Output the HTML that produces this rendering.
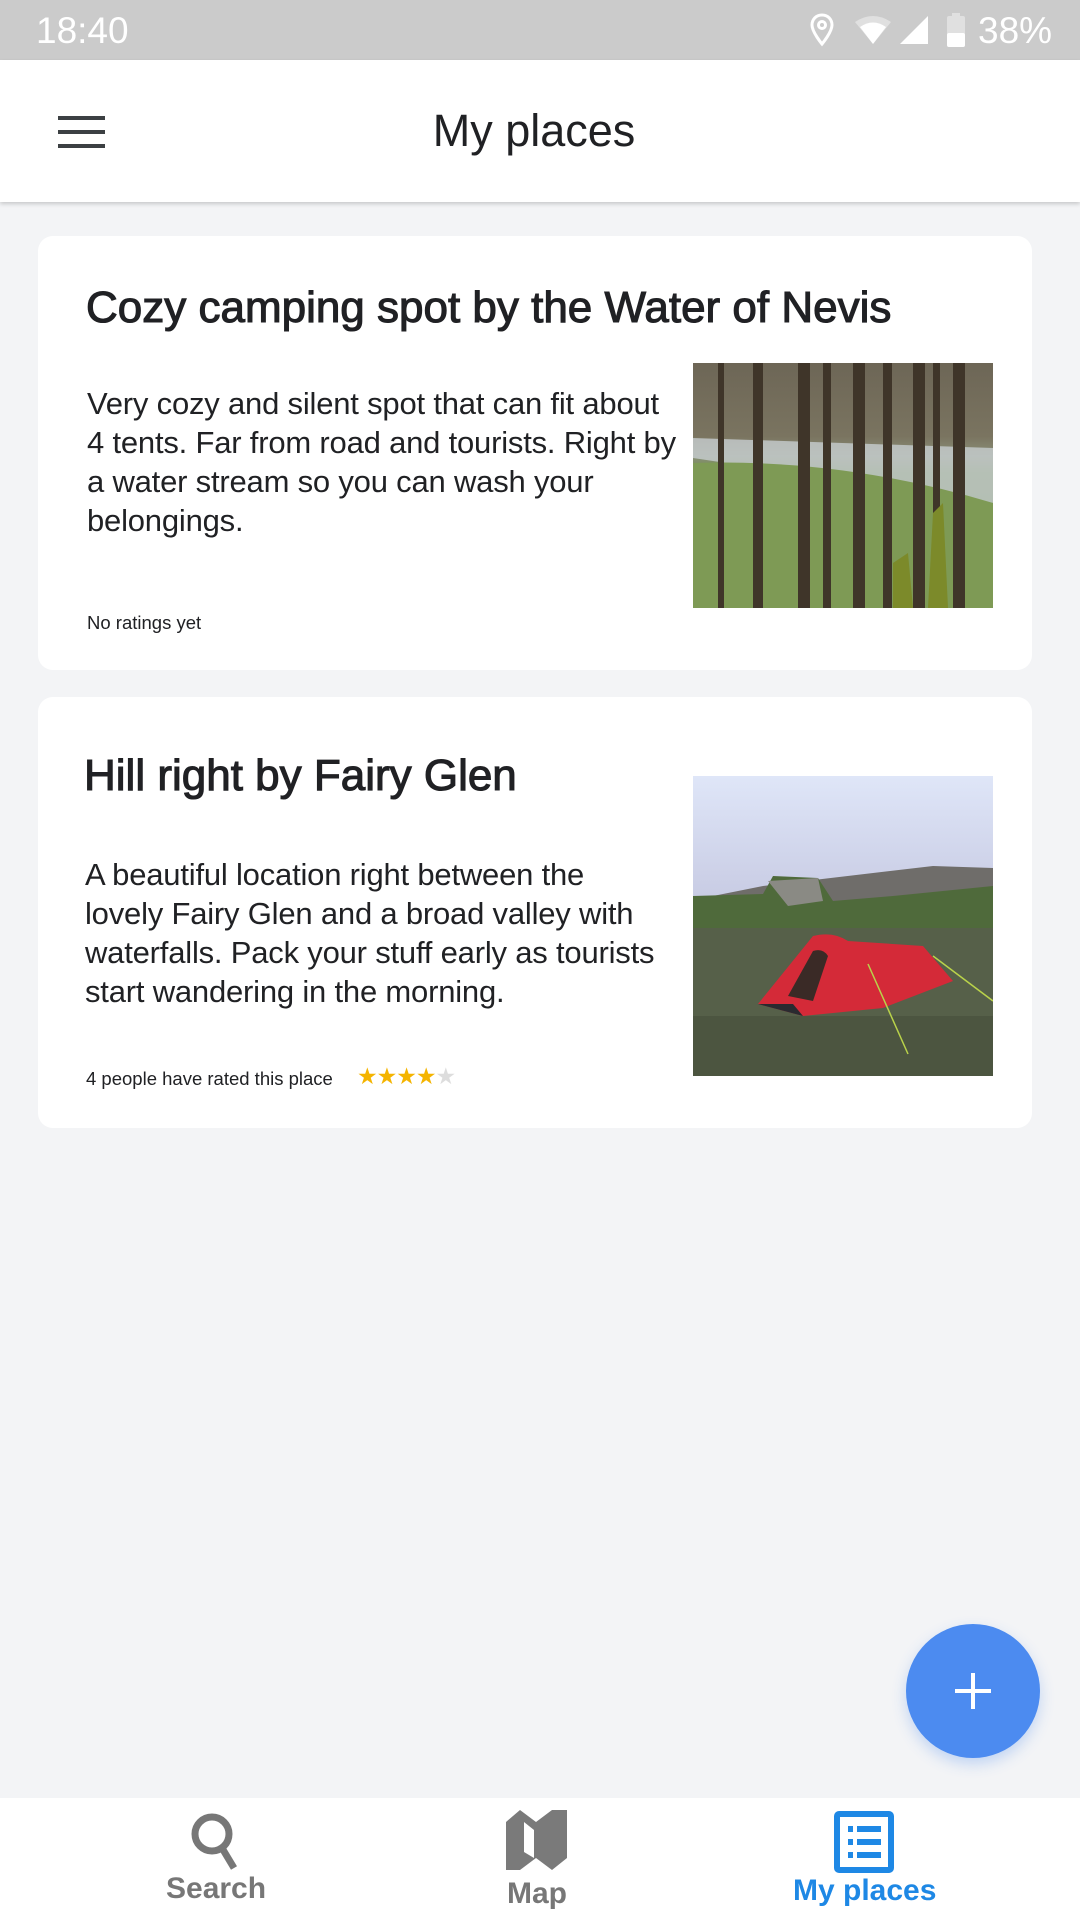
<!DOCTYPE html>
<html><head><meta charset="utf-8"><style>
*{margin:0;padding:0;box-sizing:border-box}
body{width:1080px;height:1920px;background:#f3f4f6;font-family:"Liberation Sans",sans-serif;position:relative;overflow:hidden;color:#202124}
.abs{position:absolute}
.status{left:0;top:0;width:1080px;height:60px;background:#cbcbcb;color:#fff}
.appbar{left:0;top:60px;width:1080px;height:142px;background:#fff;box-shadow:0 2px 4px rgba(0,0,0,.18)}
.card{left:38px;width:994px;background:#fff;border-radius:15px}
.title{font-size:44px;font-weight:normal;-webkit-text-stroke:1.1px #202124;white-space:nowrap}
.body{font-size:31px;line-height:39px;width:590px;letter-spacing:-0.2px}
.small{font-size:18.5px}
</style></head><body>
<div class="abs status">
 <div class="abs" style="left:36px;top:10px;font-size:37px;">18:40</div>
 <svg class="abs" style="left:808px;top:12px" width="28" height="36" viewBox="0 0 28 36"><path d="M14 3C8 3 4 7.5 4 13c0 7 10 19 10 19s10-12 10-19c0-5.5-4-10-10-10z" fill="none" stroke="#fff" stroke-width="3"/><circle cx="14" cy="13" r="3.5" fill="none" stroke="#fff" stroke-width="3"/></svg>
 <svg class="abs" style="left:853px;top:14px" width="40" height="32" viewBox="0 0 40 32"><path d="M2 8Q20-4 38 8L20 30z" fill="#e0e0e0"/><path d="M7 13Q20 4 33 13L20 30z" fill="#fff"/></svg>
 <svg class="abs" style="left:898px;top:14px" width="32" height="32"><path d="M30 2V30H2z" fill="#fff"/></svg>
 <svg class="abs" style="left:946px;top:13px" width="20" height="34"><rect x="6" y="0" width="8" height="4" fill="#e0e0e0"/><rect x="1" y="3" width="18" height="31" rx="2" fill="#e0e0e0"/><rect x="1" y="20" width="18" height="14" rx="2" fill="#fff"/></svg>
 <div class="abs" style="left:978px;top:10px;font-size:37px;">38%</div>
</div>
<div class="abs appbar">
 <div class="abs" style="left:58px;top:56px;width:47px;height:4px;background:#3c4043"></div>
 <div class="abs" style="left:58px;top:70px;width:47px;height:4px;background:#3c4043"></div>
 <div class="abs" style="left:58px;top:84px;width:47px;height:4px;background:#3c4043"></div>
 <div class="abs" style="left:0;width:1068px;top:45px;text-align:center;font-size:45px;color:#202124">My places</div>
</div>

<div class="abs card" style="top:236px;height:434px"></div>
<div class="abs title" style="left:86px;top:283px">Cozy camping spot by the Water of Nevis</div>
<div class="abs body" style="left:87px;top:384px">Very cozy and silent spot that can fit about 4 tents. Far from road and tourists. Right by a water stream so you can wash your belongings.</div>
<div class="abs small" style="left:87px;top:612px">No ratings yet</div>
<svg class="abs" style="left:693px;top:363px" width="300" height="245" viewBox="0 0 300 245">
 <defs><linearGradient id="g1" x1="0" y1="0" x2="0" y2="1"><stop offset="0" stop-color="#6d6656"/><stop offset=".3" stop-color="#7a7460"/><stop offset=".38" stop-color="#8a9078"/><stop offset=".45" stop-color="#6f8a4c"/><stop offset="1" stop-color="#5f7c3e"/></linearGradient></defs>
 <rect width="300" height="245" fill="url(#g1)"/>
 <path d="M0 75L300 85L300 140L0 95z" fill="#c7cdd0" opacity=".8"/>
 <path d="M0 100Q150 95 300 140L300 245L0 245z" fill="#7e9a55"/>
 <g fill="#3f3529">
 <rect x="60" y="0" width="10" height="245"/><rect x="105" y="0" width="12" height="245"/><rect x="130" y="0" width="8" height="245"/>
 <rect x="160" y="0" width="12" height="245"/><rect x="190" y="0" width="9" height="245"/><rect x="220" y="0" width="12" height="245"/>
 <rect x="260" y="0" width="12" height="245"/><rect x="25" y="0" width="6" height="245"/><rect x="240" y="0" width="7" height="245"/>
 </g>
 <path d="M200 200L215 190L220 245L200 245zM240 150L250 140L255 245L235 245z" fill="#7c8a2a"/>
</svg>

<div class="abs card" style="top:697px;height:431px"></div>
<div class="abs title" style="left:84px;top:751px">Hill right by Fairy Glen</div>
<div class="abs body" style="left:85px;top:855px;width:585px">A beautiful location right between the lovely Fairy Glen and a broad valley with waterfalls. Pack your stuff early as tourists start wandering in the morning.</div>
<div class="abs small" style="left:86px;top:1068px">4 people have rated this place</div>
<div class="abs" style="left:357px;top:1063px;font-size:23px;color:#f4b400;letter-spacing:-1px">★★★★<span style="color:#ddd">★</span></div>
<svg class="abs" style="left:693px;top:776px" width="300" height="300" viewBox="0 0 300 300">
 <defs><linearGradient id="sk" x1="0" y1="0" x2="0" y2="1"><stop offset="0" stop-color="#dfe6f8"/><stop offset="1" stop-color="#a7a5c6"/></linearGradient></defs>
 <rect width="300" height="300" fill="url(#sk)"/>
 <path d="M20 120L70 110L240 90L300 92L300 160L0 160z" fill="#6f6d6a"/>
 <path d="M0 120L70 118L80 100L125 102L140 125L200 120L300 110L300 155L0 155z" fill="#4f6a3b"/>
 <path d="M75 105L125 102L130 125L95 130z" fill="#8a8a84"/>
 <rect y="152" width="300" height="148" fill="#566049"/>
 <rect y="240" width="300" height="60" fill="#4c5540"/>
 <path d="M65 228L120 160Q140 155 155 165L230 170L260 205L190 232L110 240z" fill="#d42a38"/>
 <path d="M95 220L120 175Q130 172 135 180L120 225z" fill="#3a2a26"/>
 <path d="M65 228L100 228L110 240z" fill="#2a2a30"/>
 <path d="M175 188L215 278M240 180L300 225" stroke="#b9d24a" stroke-width="1.5"/>
</svg>

<div class="abs" style="left:906px;top:1624px;width:134px;height:134px;border-radius:50%;background:#4c8bf0;box-shadow:0 6px 14px rgba(76,139,240,.3)"></div>
<div class="abs" style="left:955px;top:1689px;width:36px;height:4px;background:#fff"></div>
<div class="abs" style="left:971px;top:1673px;width:4px;height:36px;background:#fff"></div>

<div class="abs" style="left:0;top:1798px;width:1080px;height:122px;background:#fff"></div>
<svg class="abs" style="left:186px;top:1810px" width="64" height="60" viewBox="0 0 64 60"><circle cx="26" cy="24" r="17" fill="none" stroke="#777" stroke-width="7"/><path d="M36 38L48 58" stroke="#777" stroke-width="7"/></svg>
<div class="abs" style="left:166px;top:1872px;font-size:30px;font-weight:bold;color:#777">Search</div>
<svg class="abs" style="left:506px;top:1808px" width="62" height="64" viewBox="0 0 62 64"><path d="M0 14L14 2L30 14L46 2L61 2L61 50L46 62L30 50L14 62L0 62z" fill="#7a7a7a"/><path d="M18 14L28 22L28 50L18 44z" fill="#fff"/></svg>
<div class="abs" style="left:507px;top:1877px;font-size:30px;font-weight:bold;color:#777">Map</div>
<svg class="abs" style="left:834px;top:1811px" width="60" height="62" viewBox="0 0 60 62"><rect x="3" y="3" width="54" height="56" rx="2" fill="none" stroke="#1e88e5" stroke-width="6"/><g fill="#1e88e5"><rect x="14" y="15" width="5" height="6"/><rect x="23" y="15" width="24" height="6"/><rect x="14" y="28" width="5" height="6"/><rect x="23" y="28" width="24" height="6"/><rect x="14" y="41" width="5" height="6"/><rect x="23" y="41" width="24" height="6"/></g></svg>
<div class="abs" style="left:793px;top:1874px;font-size:30px;font-weight:bold;color:#1e88e5">My places</div>
</body></html>
